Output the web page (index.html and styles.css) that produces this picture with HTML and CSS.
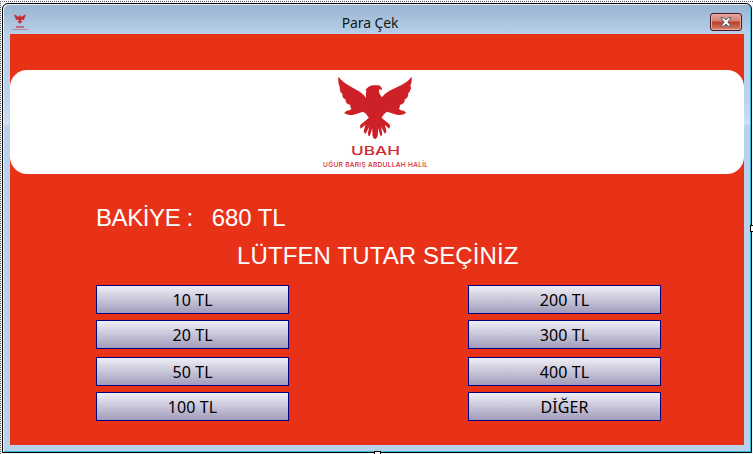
FILE: index.html
```
<!DOCTYPE html>
<html lang="tr">
<head>
<meta charset="utf-8">
<title>Para Çek</title>
<link rel="stylesheet" href="styles.css">
</head>
<body>
<svg class="defs" aria-hidden="true">
  <symbol id="eagle" viewBox="84 32 224 192">
    <path d="M85 34 C98 52 124 65 149 79 Q160 87 168 98 Q166 82 169 77 L166 74 Q176 61 188 60 H205 Q214 62 216 74 L207 72 Q204 84 215 96 Q224 84 238 76 C263 64 291 54 304 34 Q307 48 300 62 Q304 64 302 71 Q299 80 293 85 Q297 90 289 99 L283 103 Q286 109 277 116 L269 119 Q271 124 266 130 Q273 137 281 136 L288 143 Q276 151 260 148 L230 139 L222 146 L214 157 Q224 165 238 177 Q241 184 237 190 L224 178 L228 193 Q230 201 224 205 L213 184 L216 205 Q216 211 211 213 L204 189 L203 210 Q201 218 195 222 Q188 218 187 211 L186 189 L179 213 Q173 211 173 205 L177 184 L166 206 Q160 203 161 195 L166 178 L152 190 Q148 183 151 178 Q166 166 176 157 L167 145 L159 139 L131 148 Q113 152 102 143 L109 136 Q118 137 124 130 Q118 125 121 119 L112 116 Q104 109 107 103 Q94 96 97 86 Q87 78 89 65 Q82 51 85 34Z"/>
  </symbol>
</svg>
<div class="window">
  <header class="titlebar">
    <div class="app-icon"><svg><use href="#eagle"/></svg><b></b><i></i></div>
    <h1>Para Çek</h1>
    <button class="close" aria-label="Kapat">
      <svg viewBox="0 0 12 10"><path d="M.8.8H4L6 3 8 .8h3.2L7.9 5l3.3 4.2H8L6 7 4 9.2H.8L4.1 5Z"/></svg>
    </button>
  </header>
  <main class="client">
    <section class="banner">
      <svg class="bird"><use href="#eagle"/></svg>
      <svg class="brand" viewBox="0 0 110 28">
        <text class="name" x="31" y="13" textLength="49" lengthAdjust="spacingAndGlyphs">UBAH</text>
        <text class="members" x="3" y="25" textLength="105" lengthAdjust="spacing">UĞUR BARIŞ ABDULLAH HALİL</text>
      </svg>
    </section>
    <p class="balance"><span class="label">BAKİYE :</span><span>680 TL</span></p>
    <p class="prompt">LÜTFEN TUTAR SEÇİNİZ</p>
    <div class="amounts">
      <button>10 TL</button><button>200 TL</button>
      <button>20 TL</button><button>300 TL</button>
      <button>50 TL</button><button>400 TL</button>
      <button>100 TL</button><button>DİĞER</button>
    </div>
  </main>
</div>
<span class="edge edge-top"></span><span class="edge edge-left"></span>
<span class="grip grip-right"></span><span class="grip grip-bottom"></span>
</body>
</html>
```
FILE: styles.css
```
* { box-sizing: border-box; }
body {
  position: relative;
  width: 753px;
  height: 454px;
  margin: 0;
  padding: 3px 1px 1px 2px;
  overflow: hidden;
  background: #f4f6f9;
  font-family: "Noto Sans", sans-serif;
}
.defs { position: absolute; width: 0; height: 0; }
.window {
  width: 750px;
  height: 450px;
  padding: 0 5px 6px 6px;
  border: 1px solid #000;
  border-radius: 6px 6px 0 0;
  background: linear-gradient(#99b4d1, #b9d1ea 31px, #b9d1ea 85px, #c6d8ee 112px, #d3e1f1 120px, #b9d1ea 121px);
  box-shadow: inset 1px 1px #e9f3fb, inset -1px -1px #35bcd8;
}
.titlebar {
  display: grid;
  grid-template-columns: 52px 1fr 60px;
  height: 30px;
  margin-left: 1px;
}
.app-icon {
  display: flex;
  flex-direction: column;
  align-items: center;
  width: 19px;
  padding-top: 10px;
}
.app-icon svg { width: 12px; height: 10px; fill: #ca2630; }
.app-icon b { width: 8px; height: 2px; margin-top: 2px; background: #bd6d88; }
.app-icon i { width: 16px; height: 1px; margin-top: 1px; background: #b7899f; }
h1 {
  margin: 9px 8px 0 0;
  font: 14px/20px "Noto Sans", sans-serif;
  letter-spacing: -.1px;
  text-align: center;
  color: #111820;
}
.close {
  display: grid;
  place-items: center;
  width: 32px;
  height: 18px;
  margin: 9px 0 0 24px;
  padding: 0;
  border: 1px solid #431725;
  border-radius: 3px;
  background: linear-gradient(#e5a399, #d48175 46%, #bb3b24 48%, #c8644c 78%, #d88b78);
  box-shadow: inset 0 0 0 1px #e8aca2;
}
.close svg { width: 12px; height: 10px; fill: #f8f8f8; stroke: #535967; stroke-width: 1; }
.client {
  width: 734px;
  height: 411px;
  margin-left: 1px;
  padding-top: 36px;
  background: #e83218;
}
.banner {
  display: flex;
  flex-direction: column;
  align-items: center;
  height: 104px;
  padding: 6px 4px 0 0;
  border-radius: 17px;
  background: #fff;
}
.bird { width: 75px; height: 64px; fill: #ce2027; }
.brand { width: 110px; height: 28px; margin-top: 2px; overflow: visible; }
.brand text { fill: #d4252e; }
.name { font: 500 11.5px Inter, sans-serif; }
.members { font: 500 6.6px Inter, sans-serif; }
.balance, .prompt {
  margin: 0;
  font: 24px/28px "Liberation Sans", sans-serif;
  color: #fff;
}
.balance { display: flex; gap: 19px; padding: 30px 0 0 86px; letter-spacing: -.1px; }
.balance .label { letter-spacing: -.4px; }
.prompt { padding: 10px 0 0 227px; letter-spacing: .12px; }
.amounts {
  display: grid;
  grid-template-columns: 193px 193px;
  grid-template-rows: 29px 29px 29px 29px;
  column-gap: 179px;
  row-gap: 6px;
  padding: 15px 0 0 86px;
}
.amounts button {
  height: 29px;
  padding: 2px 0 0;
  border: 1px solid #000080;
  background: linear-gradient(#f0eff6, #a09cbb);
  font: 16px/25px "Noto Sans", sans-serif;
  letter-spacing: .1px;
  color: #000;
}
.amounts button:nth-child(n+5) { margin-top: 2px; }
.edge, .grip { position: absolute; }
.edge-top { top: 1px; left: 0; width: 753px; height: 1px; background: repeating-linear-gradient(90deg, #555 0 1px, #fff 1px 2px); }
.edge-left { top: 0; left: 0; width: 1px; height: 454px; background: repeating-linear-gradient(#fff 0 1px, #555 1px 2px); }
.grip { width: 7px; height: 7px; border: 1px solid #000; background: #fff; }
.grip-right { top: 225px; left: 750px; }
.grip-bottom { top: 451px; left: 374px; }
```
